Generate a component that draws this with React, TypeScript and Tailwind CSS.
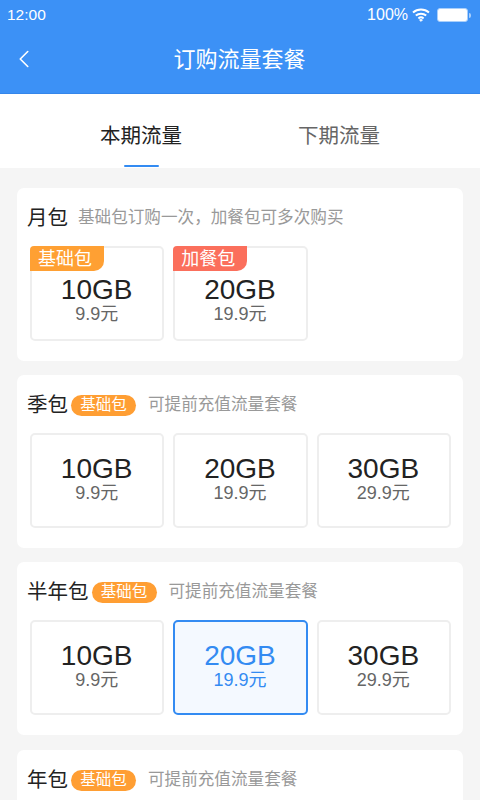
import React from 'react';
import { ChevronLeft } from 'lucide-react';

const FONT = "font-['Liberation_Sans','Noto_Sans_CJK_SC',sans-serif]";

interface Plan {
  size: string;
  price: string;
  tag?: 'base' | 'extra';
  active?: boolean;
}

const PlanTile: React.FC<Plan> = ({ size, price, tag, active }) => (
  <div
    className={`relative flex h-[95px] flex-col items-center rounded-[5px] border-2 pr-[1px] ${
      active ? 'border-[#338bf2] bg-[#f4f9ff]' : 'border-[#eeeeee] bg-white'
    } ${tag ? 'pt-[28px]' : 'pt-[20px]'}`}
  >
    {tag && (
      <div
        className={`absolute left-[-2px] top-[-2px] flex h-[25px] w-[74px] items-center justify-center rounded-tl-[4px] rounded-br-[10px] pr-[4px] text-[18px] leading-none text-white ${
          tag === 'base' ? 'bg-[#ffa033]' : 'bg-[#fb6f5c]'
        }`}
      >
        {tag === 'base' ? '基础包' : '加餐包'}
      </div>
    )}
    <div className={`text-[28px] leading-[28px] ${active ? 'text-[#338bf2]' : 'text-[#222222]'}`}>{size}</div>
    <div className={`text-[18px] leading-[21px] ${active ? 'text-[#338bf2]' : 'text-[#666666]'}`}>{price}</div>
  </div>
);

const Badge = () => (
  <span className="ml-[3px] mt-[-1px] flex h-[21px] w-[65px] items-center justify-center rounded-full bg-[#ff9e33] text-[15.5px] leading-none text-white">
    基础包
  </span>
);

const Section: React.FC<{ title: string; note: string; plans?: Plan[]; badge?: boolean; noteGap?: string }> = ({
  title,
  note,
  plans,
  badge,
  noteGap,
}) => (
  <div className="mb-[14px] rounded-[7px] bg-white pb-[20px] pl-[13px] pr-[12px] nth-3:mb-[15px]">
    <div className="flex h-[58px] items-center pt-[3px]">
      <span className="ml-[-3px] text-[20.5px] leading-none text-[#222222]">{title}</span>
      {badge && <Badge />}
      <span className={`${noteGap} text-[16.6px] leading-none text-[#999999]`}>{note}</span>
    </div>
    {plans && (
      <div className="grid grid-cols-3 gap-[9px]">
        {plans.map((p) => (
          <PlanTile key={p.size} {...p} />
        ))}
      </div>
    )}
  </div>
);

export default function App() {
  return (
    <div className={`${FONT} flex h-[800px] w-[480px] flex-col overflow-hidden bg-[#f5f5f5]`}>
      {/* Header */}
      <div className="h-[94px] shrink-0 border-b border-[#3486ea] bg-[#3c91f6] text-white">
        <div className="flex h-[29px] items-center justify-between pl-[7px] pr-[9px] pt-[1px]">
          <span className="text-[15.5px] leading-none">12:00</span>
          <div className="flex items-center">
            <span className="text-[16px] leading-none">100%</span>
            <svg width="18" height="14" viewBox="0 0 18 14" className="ml-[4px]" fill="none" stroke="white" strokeWidth="2">
              <path d="M1 4.6C5.6 .6 12.4 .6 17 4.6" />
              <path d="M3.8 7.6C6.8 5 11.2 5 14.2 7.6" />
              <path d="M6.4 10.4C8 9 10 9 11.6 10.4" />
              <path d="M9 13.6 7.4 12 9 11l1.6 1z" fill="white" strokeWidth="0.5" />
            </svg>
            <div className="ml-[7px] flex items-center">
              <div className="h-[14px] w-[31px] rounded-[3px] border border-[#a9cffb] bg-white" />
              <div className="ml-[1px] h-[5px] w-[2px] rounded-r-sm bg-[#a9cffb]" />
            </div>
          </div>
        </div>
        <div className="relative flex h-[61px] items-center justify-center pt-[1px]">
          <ChevronLeft size={30} strokeWidth={1.3} className="absolute left-[9px] top-[15px]" />
          <span className="ml-[-1px] text-[22px] leading-none">订购流量套餐</span>
        </div>
      </div>

      {/* Tabs */}
      <div className="flex h-[74px] shrink-0 bg-white">
        <div className="ml-[42px] flex w-[198px] flex-col items-center">
          <span className="mt-[32px] text-[20.5px] leading-none text-[#222222]">本期流量</span>
          <div className="mt-[18px] h-[2px] w-[35px] rounded-full bg-[#338bf2]" />
        </div>
        <div className="flex w-[198px] flex-col items-center">
          <span className="mt-[32px] text-[20.5px] leading-none text-[#666666]">下期流量</span>
        </div>
      </div>

      {/* Plans */}
      <div className="px-[17px] pt-[20px]">
        <Section
          title="月包"
          note="基础包订购一次，加餐包可多次购买"
          noteGap="ml-[10px]"
          plans={[
            { size: '10GB', price: '9.9元', tag: 'base' },
            { size: '20GB', price: '19.9元', tag: 'extra' },
          ]}
        />
        <Section
          title="季包"
          note="可提前充值流量套餐"
          badge
          noteGap="ml-[12px]"
          plans={[
            { size: '10GB', price: '9.9元' },
            { size: '20GB', price: '19.9元' },
            { size: '30GB', price: '29.9元' },
          ]}
        />
        <Section
          title="半年包"
          note="可提前充值流量套餐"
          badge
          noteGap="ml-[12px]"
          plans={[
            { size: '10GB', price: '9.9元' },
            { size: '20GB', price: '19.9元', active: true },
            { size: '30GB', price: '29.9元' },
          ]}
        />
        <Section title="年包" note="可提前充值流量套餐" badge noteGap="ml-[12px]" />
      </div>
    </div>
  );
}
